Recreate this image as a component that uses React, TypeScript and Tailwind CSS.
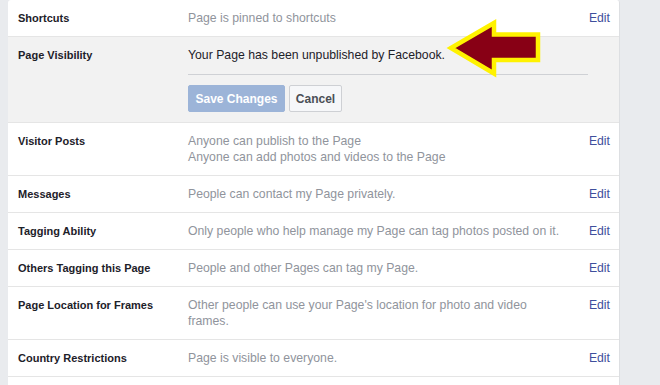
import React from "react";

type Row = { label: string; lines: string[] };

const rowsAfter: Row[] = [
  { label: "Visitor Posts", lines: ["Anyone can publish to the Page", "Anyone can add photos and videos to the Page"] },
  { label: "Messages", lines: ["People can contact my Page privately."] },
  { label: "Tagging Ability", lines: ["Only people who help manage my Page can tag photos posted on it."] },
  { label: "Others Tagging this Page", lines: ["People and other Pages can tag my Page."] },
  { label: "Page Location for Frames", lines: ["Other people can use your Page's location for photo and video frames."] },
  { label: "Country Restrictions", lines: ["Page is visible to everyone."] },
];

function SettingRow({ label, lines }: Row) {
  return (
    <div className="flex border-b border-[#e5e5e5] pl-[10px] pr-[9px] pt-[10px] pb-[10px]">
      <div className="w-[170px] shrink-0 text-[11px] font-bold text-[#1d2129]">{label}</div>
      <div className="w-[374px] shrink-0 text-[12.25px] text-[#90949c]">
        {lines.map((l, i) => (
          <div key={i}>{l}</div>
        ))}
      </div>
      <div className="flex-1 text-right text-[12.25px] text-[#3f4f9c]">Edit</div>
    </div>
  );
}

export default function App() {
  return (
    <div className="relative w-[660px] h-[385px] overflow-hidden bg-[#e9ebee] font-['Liberation_Sans',Arial,sans-serif] text-[12px] leading-4">
      <div className="ml-[8px] w-[612px] h-[400px] bg-white rounded-t-[3px] border-r border-[#dddfe2]">
        <SettingRow label="Shortcuts" lines={["Page is pinned to shortcuts"]} />
        <div className="flex border-b border-[#e5e5e5] bg-[#f2f2f2] pl-[10px] pr-[9px] pt-[10px] pb-[10px]">
          <div className="w-[170px] shrink-0 text-[11px] font-bold text-[#1d2129]">Page Visibility</div>
          <div className="w-[400px] shrink-0">
            <div className="text-[12.25px] text-[#1d2129]">Your Page has been unpublished by Facebook.</div>
            <div className="mt-[11px] h-px bg-[#cfd1d5]" />
            <div className="mt-[10px] flex gap-[4px]">
              <button className="h-[27px] w-[97px] rounded-[2px] border border-[#9cb4d8] bg-[#9cb4d8] font-bold text-white">
                Save Changes
              </button>
              <button className="h-[27px] w-[53px] rounded-[2px] border border-[#ced0d4] bg-[#f6f7f9] font-bold text-[#4b4f56]">
                Cancel
              </button>
            </div>
          </div>
        </div>
        {rowsAfter.map((r) => (
          <SettingRow key={r.label} {...r} />
        ))}
      </div>
      <svg className="pointer-events-none absolute left-0 top-0" width="660" height="385" viewBox="0 0 660 385">
        <polygon
          points="451,48 494,23 494,34.5 538,34.5 538,60 494,60 494,73.5"
          fill="#880015"
          stroke="#fff200"
          strokeWidth="4.5"
          strokeLinejoin="miter"
        />
      </svg>
    </div>
  );
}
